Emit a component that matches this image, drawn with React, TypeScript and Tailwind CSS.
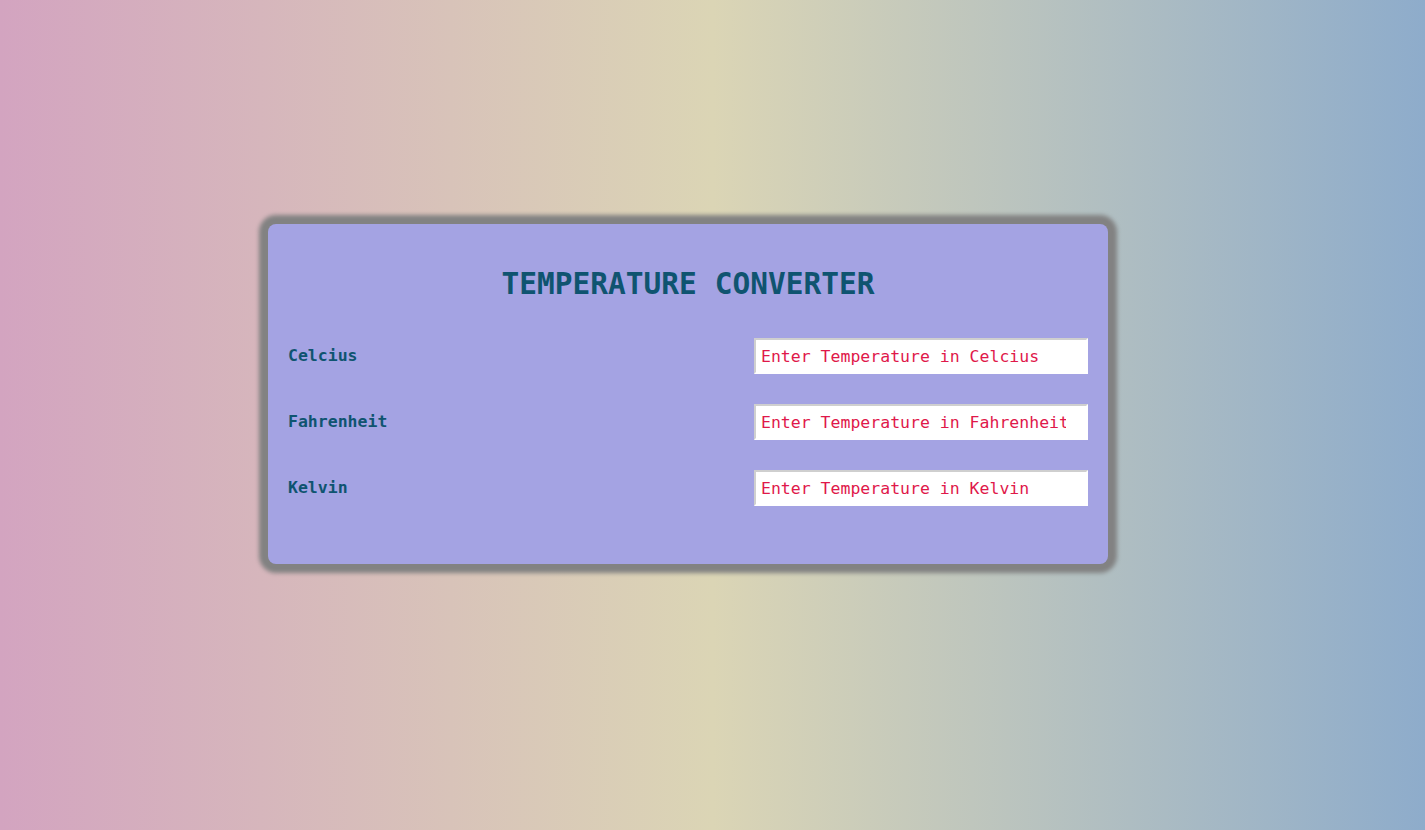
const rows = [
  { id: "celcius", label: "Celcius" },
  { id: "fahrenheit", label: "Fahrenheit" },
  { id: "kelvin", label: "Kelvin" },
];

const App = () => {
  return (
    <div className="flex min-h-[830px] w-full items-center justify-center bg-[linear-gradient(to_right,#d3a4c0,#dbd5b5_50%,#8eaccb)] font-['DejaVu_Sans_Mono',monospace]">
      <div className="mr-[49px] mb-[42px] flex h-[340px] w-[840px] flex-col rounded-lg bg-[#a4a3e3] px-5 pt-[44px] shadow-[0_0_4px_9px_#828282]">
        <h1 className="text-center text-[29.5px] font-bold leading-8 text-[#0f5470]">
          TEMPERATURE CONVERTER
        </h1>
        <div className="mt-[38px] flex flex-col gap-[30px]">
          {rows.map((row) => (
            <div key={row.id} className="flex items-center justify-between">
              <label
                htmlFor={row.id}
                className="text-[16.5px] font-bold text-[#0f5470]"
              >
                {row.label}
              </label>
              <input
                id={row.id}
                type="number"
                placeholder={`Enter Temperature in ${row.label}`}
                className="h-9 w-[334px] border-2 border-t-[#cfcfcf] border-l-[#cfcfcf] border-r-white border-b-white bg-white px-[5px] text-[16.5px] text-[#e0184a] outline-none placeholder:text-[#e0184a] [appearance:textfield]"
              />
            </div>
          ))}
        </div>
      </div>
    </div>
  );
};

export default App;
